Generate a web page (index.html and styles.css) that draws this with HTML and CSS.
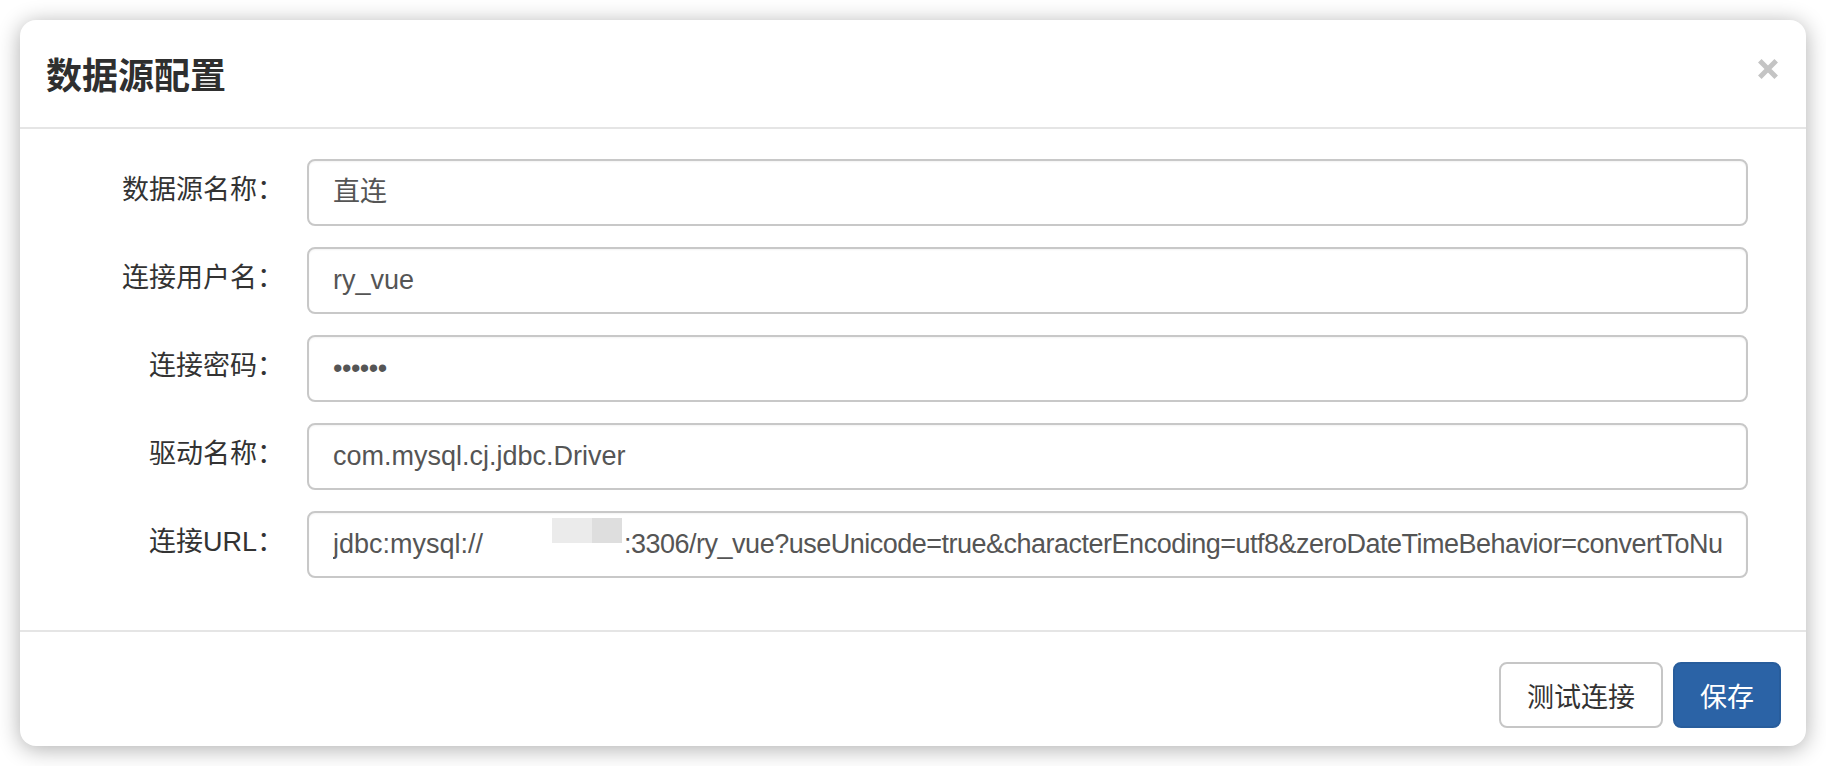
FILE: index.html
```html
<!DOCTYPE html>
<html lang="zh-CN">
<head>
<meta charset="utf-8">
<title>数据源配置</title>
<link rel="stylesheet" href="styles.css">
</head>
<body>
<div class="modal">
  <div class="modal-header">
    <h4 class="modal-title">数据源配置</h4>
    <button class="close" type="button" aria-label="Close">
      <svg width="20" height="20" viewBox="0 0 20 20"><path d="M1.8 1.8 L18.2 18.2 M18.2 1.8 L1.8 18.2" stroke="#c4c4c4" stroke-width="5" fill="none"/></svg>
    </button>
  </div>
  <div class="modal-body">
    <div class="form-row">
      <label class="control-label">数据源名称：</label>
      <div class="form-control"><div class="value">直连</div></div>
    </div>
    <div class="form-row">
      <label class="control-label">连接用户名：</label>
      <div class="form-control"><div class="value">ry_vue</div></div>
    </div>
    <div class="form-row">
      <label class="control-label">连接密码：</label>
      <div class="form-control"><div class="value password">••••••</div></div>
    </div>
    <div class="form-row">
      <label class="control-label">驱动名称：</label>
      <div class="form-control"><div class="value">com.mysql.cj.jdbc.Driver</div></div>
    </div>
    <div class="form-row">
      <label class="control-label">连接URL：</label>
      <div class="form-control"><div class="value">jdbc:mysql://<span class="redact"><span class="blk blk-a"></span><span class="blk blk-b"></span></span><span class="url-rest">:3306/ry_vue?useUnicode=true&amp;characterEncoding=utf8&amp;zeroDateTimeBehavior=convertToNu</span></div></div>
    </div>
  </div>
  <div class="modal-footer">
    <button class="btn btn-default" type="button">测试连接</button>
    <button class="btn btn-primary" type="button">保存</button>
  </div>
</div>
</body>
</html>
```

FILE: styles.css
```css
html, body {
  margin: 0;
  padding: 0;
  background: #ffffff;
}

body {
  padding: 20px;
  font-family: "Liberation Sans", "Noto Sans CJK SC", sans-serif;
  color: #333333;
}

.modal {
  width: 1786px;
  background: #ffffff;
  border-radius: 16px;
  box-shadow: 0 3px 22px rgba(0, 0, 0, 0.32);
  overflow: hidden;
}

.modal-header {
  height: 107px;
  display: flex;
  align-items: center;
  justify-content: space-between;
  padding: 0 28px 0 26px;
  border-bottom: 2px solid #e5e5e5;
}

.modal-title {
  margin: 0;
  font-family: "Noto Sans CJK SC", sans-serif;
  font-size: 36px;
  font-weight: 700;
  line-height: 1;
  color: #2f2f2f;
  position: relative;
  top: -1px;
}

.close {
  border: 0;
  background: transparent;
  padding: 0;
  width: 20px;
  height: 20px;
  display: flex;
  cursor: pointer;
  position: relative;
  top: -5px;
}

.modal-body {
  padding: 30px 58px 52px 0;
  display: flex;
  flex-direction: column;
  gap: 21px;
}

.form-row {
  display: grid;
  grid-template-columns: 264px minmax(0, 1fr);
  column-gap: 23px;
  align-items: center;
}

.control-label {
  text-align: right;
  font-size: 27px;
  line-height: 1;
  color: #333333;
  position: relative;
  top: -2px;
  white-space: nowrap;
}

.form-control {
  min-width: 0;
  height: 67px;
  box-sizing: border-box;
  border: 2px solid #c8c8c8;
  border-radius: 8px;
  padding: 0 23px 0 24px;
  background: #ffffff;
  box-shadow: inset 0 1px 2px rgba(0, 0, 0, 0.05);
}

.value {
  height: 63px;
  line-height: 63px;
  font-size: 27px;
  color: #555555;
  white-space: nowrap;
  overflow: hidden;
}

.url-rest {
  letter-spacing: -0.5px;
}

.password {
  letter-spacing: -0.5px;
}

.redact {
  display: inline-flex;
  align-items: flex-start;
  vertical-align: top;
  width: 141px;
  height: 63px;
  padding-left: 69px;
  box-sizing: border-box;
}

.blk {
  display: block;
  height: 25px;
  margin-top: 5px;
}

.blk-a {
  width: 40px;
  background: #ebebeb;
}

.blk-b {
  width: 30px;
  background: #dedede;
}

.modal-footer {
  border-top: 2px solid #e5e5e5;
  padding: 30px 25px 18px 0;
  display: flex;
  justify-content: flex-end;
  gap: 10px;
}

.btn {
  height: 66px;
  box-sizing: border-box;
  padding: 0 26px;
  border-radius: 8px;
  font-family: "Noto Sans CJK SC", sans-serif;
  font-size: 27px;
  line-height: 1;
  cursor: pointer;
}

.btn-default {
  background: #ffffff;
  border: 2px solid #c6c6c6;
  color: #333333;
}

.btn-primary {
  background: #2b63a6;
  border: 2px solid #285d9c;
  color: #ffffff;
  padding: 0 25px;
}
```
